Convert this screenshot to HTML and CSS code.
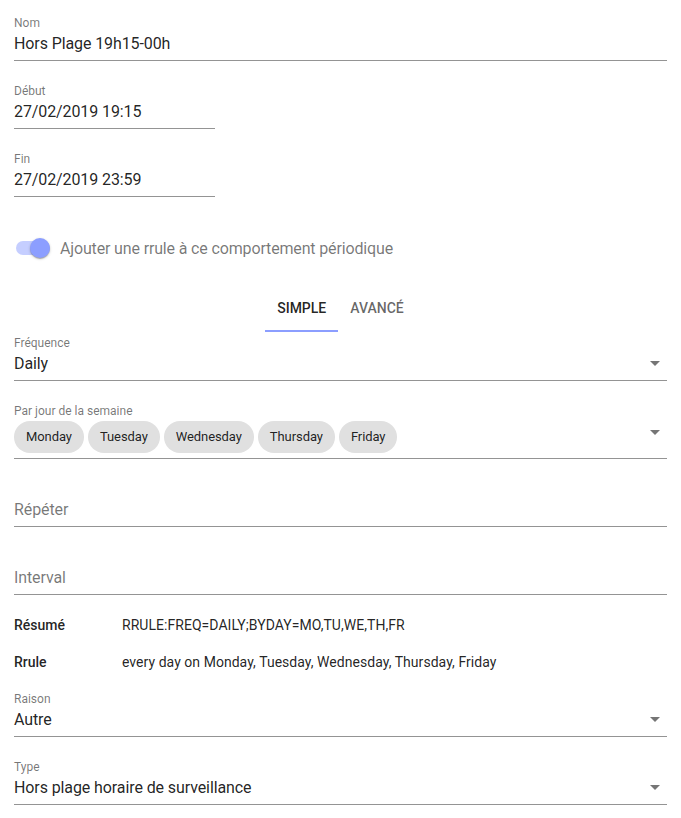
FILE: index.html
```html
<!DOCTYPE html>
<html lang="fr">
<head>
<meta charset="utf-8">
<link rel="stylesheet" href="styles.css">
</head>
<body>
<div class="page">
  <div class="field">
    <div class="label">Nom</div>
    <div class="control">Hors Plage 19h15-00h</div>
  </div>
  <div class="field short">
    <div class="label">Début</div>
    <div class="control">27/02/2019 19:15</div>
  </div>
  <div class="field short">
    <div class="label">Fin</div>
    <div class="control">27/02/2019 23:59</div>
  </div>

  <div class="switch-row">
    <span class="switch"><span class="track"></span><span class="thumb"></span></span>
    <span class="switch-label">Ajouter une rrule à ce comportement périodique</span>
  </div>

  <div class="tabs">
    <div class="tab active">Simple</div>
    <div class="tab">Avancé</div>
  </div>

  <div class="field">
    <div class="label">Fréquence</div>
    <div class="control select"><span class="value">Daily</span><svg class="arrow" viewBox="0 0 24 24" width="24" height="24"><path d="M7 10l5 5 5-5z"/></svg></div>
  </div>

  <div class="field">
    <div class="label">Par jour de la semaine</div>
    <div class="control chips-control">
      <div class="chips">
        <span class="chip">Monday</span>
        <span class="chip">Tuesday</span>
        <span class="chip">Wednesday</span>
        <span class="chip">Thursday</span>
        <span class="chip">Friday</span>
      </div>
      <svg class="arrow top" viewBox="0 0 24 24" width="24" height="24"><path d="M7 10l5 5 5-5z"/></svg>
    </div>
  </div>

  <div class="field">
    <div class="label"></div>
    <div class="control placeholder">Répéter</div>
  </div>
  <div class="field">
    <div class="label"></div>
    <div class="control placeholder">Interval</div>
  </div>

  <div class="summary">
    <div class="summary-row"><span class="key">Résumé</span><span class="val">RRULE:FREQ=DAILY;BYDAY=MO,TU,WE,TH,FR</span></div>
    <div class="summary-row"><span class="key">Rrule</span><span class="val">every day on Monday, Tuesday, Wednesday, Thursday, Friday</span></div>
  </div>

  <div class="field">
    <div class="label">Raison</div>
    <div class="control select"><span class="value">Autre</span><svg class="arrow" viewBox="0 0 24 24" width="24" height="24"><path d="M7 10l5 5 5-5z"/></svg></div>
  </div>
  <div class="field">
    <div class="label">Type</div>
    <div class="control select"><span class="value">Hors plage horaire de surveillance</span><svg class="arrow" viewBox="0 0 24 24" width="24" height="24"><path d="M7 10l5 5 5-5z"/></svg></div>
  </div>
</div>
</body>
</html>
```

FILE: styles.css
```css
html, body {
  margin: 0;
  padding: 0;
  background: #ffffff;
}
body {
  font-family: Roboto, "Liberation Sans", sans-serif;
  color: rgba(0, 0, 0, 0.87);
}
.page {
  padding: 16px 14px 0 14px;
  display: flex;
  flex-direction: column;
  align-items: stretch;
}
.field {
  margin-bottom: 23px;
}
.field.short {
  width: 201px;
}
.label {
  font-size: 12px;
  line-height: 14px;
  height: 14px;
  color: rgba(0, 0, 0, 0.54);
}
.control {
  font-size: 16px;
  line-height: 19px;
  letter-spacing: -0.1px;
  padding: 4px 0 7px 0;
  border-bottom: 1px solid rgba(0, 0, 0, 0.42);
  color: rgba(0, 0, 0, 0.87);
}
.control.placeholder {
  color: rgba(0, 0, 0, 0.54);
}
.control.select {
  display: flex;
  align-items: center;
  justify-content: space-between;
}
.arrow {
  fill: rgba(0, 0, 0, 0.54);
  flex: none;
  margin: -3px 0 -2px 0;
}
.chips-control {
  display: flex;
  justify-content: space-between;
  align-items: flex-start;
  padding: 3px 0 5px 0;
}
.chips {
  display: flex;
  gap: 4px;
}
.chip {
  height: 32px;
  line-height: 32px;
  border-radius: 16px;
  background: #e0e0e0;
  padding: 0 12px;
  font-size: 13px;
  letter-spacing: -0.08px;
  color: rgba(0, 0, 0, 0.87);
}
.arrow.top {
  margin: -1px 0 0 0;
}
.switch-row {
  height: 56px;
  display: flex;
  align-items: center;
}
.switch {
  position: relative;
  width: 46px;
  height: 20px;
  flex: none;
}
.track {
  position: absolute;
  left: 2px;
  top: 3px;
  width: 34px;
  height: 14px;
  border-radius: 7px;
  background: #8c9eff;
  opacity: 0.5;
}
.thumb {
  position: absolute;
  left: 16px;
  top: 0;
  width: 20px;
  height: 20px;
  border-radius: 50%;
  background: #8c9eff;
  box-shadow: 0 1px 3px 0 rgba(0,0,0,0.2), 0 1px 1px 0 rgba(0,0,0,0.14), 0 2px 1px -1px rgba(0,0,0,0.12);
}
.switch-label {
  font-size: 16px;
  letter-spacing: -0.15px;
  color: rgba(0, 0, 0, 0.54);
}
.tabs {
  margin-top: 8px;
  margin-bottom: 4px;
  display: flex;
  justify-content: center;
  height: 48px;
}
.tab {
  padding: 2px 12px 0 12px;
  height: 48px;
  box-sizing: border-box;
  display: flex;
  align-items: center;
  font-size: 14px;
  font-weight: 500;
  text-transform: uppercase;
  color: rgba(0, 0, 0, 0.6);
  border-bottom: 2px solid transparent;
}
.tab.active {
  color: rgba(0, 0, 0, 0.87);
  border-bottom-color: #8c9eff;
}
.summary {
  margin-top: -12px;
  margin-bottom: 12px;
}
.summary-row {
  height: 37px;
  display: flex;
  align-items: center;
  font-size: 14px;
}
.key {
  width: 108px;
  font-weight: 500;
  flex: none;
}
.val {
  letter-spacing: 0.04px;
  color: rgba(0, 0, 0, 0.87);
}
```
